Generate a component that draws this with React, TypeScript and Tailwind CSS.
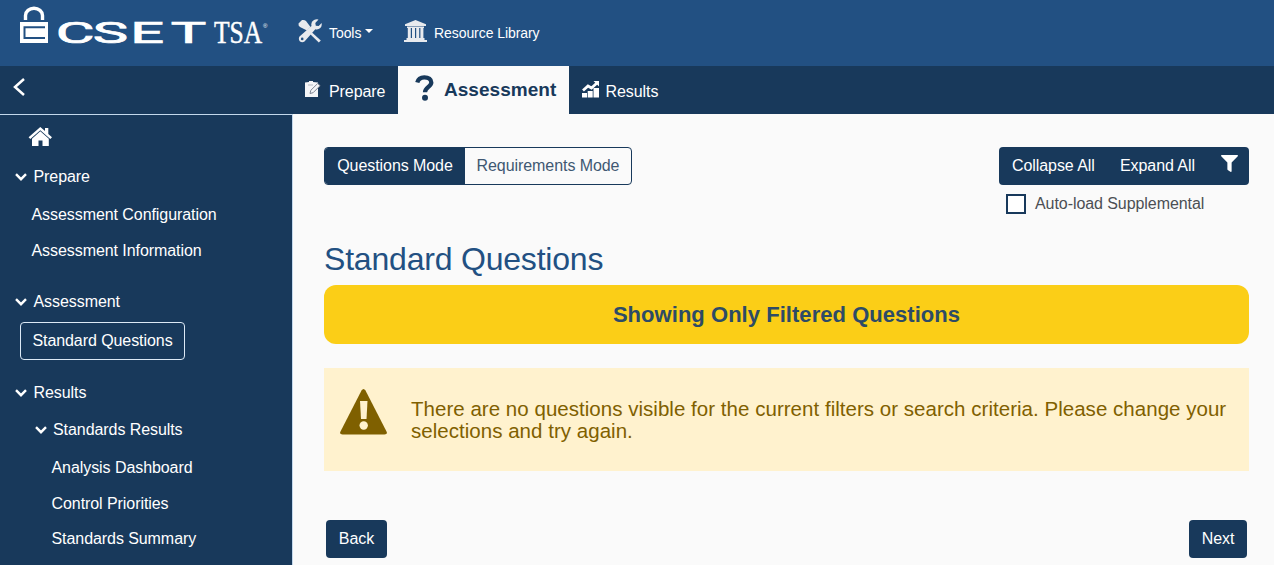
import type { ReactNode } from "react";
import { FaFilter } from "react-icons/fa";

function Logo() {
  return (
    <svg width="256" height="62" viewBox="18 4 256 62" fill="#fff" aria-label="CSET TSA">
      <path d="M25.500 20v-4.500a8.500 7.200 0 0 1 17 0V20" fill="none" stroke="#fff" strokeWidth="3.400" />
      <path d="M20 22h28v21H20Z" />
      <path d="M45 27.200H24.500V38H45" fill="none" stroke="#225082" strokeWidth="2" />
      <text transform="scale(2.050 1)" x="27.200 45.300 63.600 83.300" y="43" fontFamily="Roboto" fontSize="29" stroke="#fff" strokeWidth="0.700">CSET</text>
      <text x="214" y="43" fontFamily="Liberation Serif" fontSize="32" textLength="48" lengthAdjust="spacingAndGlyphs" stroke="#fff" strokeWidth="0.500">TSA</text>
      <text x="263" y="28" fontFamily="Liberation Sans" fontSize="6">®</text>
    </svg>
  );
}

function ToolsIcon() {
  return (
    <svg width="24" height="24" viewBox="0 0 24 24" fill="#e8eaee">
      <path d="M.500 4.500 4 1q2.500-.500 4 1l4.500 6L9 11.500 2 8Q0 6.500.500 4.500Z" />
      <path d="m13.500 13 9.300 8.500-2 2-9.300-9Z" />
      <path d="M1.500 17.500 13.500 7Q12.500 3 16 1q2-1 4.500-.500L17.300 4l.500 2.800 2.900.200L23.600 4q.600 3-1.300 5-2 2-5 1.300L6.500 22.500q-2.200 1.500-4.500 0-2-2.400-.500-5Z" />
      <circle cx="4.200" cy="19.900" r="1.300" fill="#225082" />
    </svg>
  );
}

function LibraryIcon() {
  return (
    <svg width="23" height="22" viewBox="0 0 23 22" fill="#e8eaee">
      <path d="M11.500 0 22 4.200V6H1V4.200ZM3 6.500h17V8H3ZM3.800 8h3v10h-3Zm4.200 0h3v10H8Zm4.200 0h3v10h-3Zm4.200 0h3v10h-3ZM2.500 18h18v2h-18ZM0 20h23v2H0Z" />
    </svg>
  );
}

function PrepareIcon() {
  return (
    <svg width="16" height="17" viewBox="0 0 16 17">
      <path d="M0 1.500 4 1V0h4v1l5 .500V16H0Z" fill="#f4f5f7" />
      <path d="m5 12.500.800-3.200 6.900-6.800 2.400 2.200-7 7Z" fill="#f4f5f7" stroke="#7d8492" strokeWidth="1" />
      <path d="M3 4h5" stroke="#8991a0" strokeWidth=".6" />
    </svg>
  );
}

function QuestionIcon() {
  return (
    <svg className="mt-[9px]" width="20" height="26" viewBox="0 0 20 26" fill="none">
      <path d="M2.300 7.500Q3.500 2.300 9.300 2.300c4.400 0 7 2 7 5.200 0 4.300-6.300 4.500-6.300 9.800" stroke="#18395b" strokeWidth="4.300" />
      <circle cx="10" cy="22.700" r="3" fill="#18395b" />
    </svg>
  );
}

function ResultsIcon() {
  return (
    <svg width="18" height="17" viewBox="0 0 18 17" fill="#fff">
      <path d="M0 12h5v4.500H0Zm5.700-2h5v6.500h-5Zm5.800-3H17v9.500h-5.500Z" />
      <path d="m1 9.500 5-4.500 3.500 2L15 2" fill="none" stroke="#fff" strokeWidth="2.800" />
      <path d="M11.500 0H17v5.500Z" />
    </svg>
  );
}

function HomeIcon() {
  return (
    <svg className="mt-3 ml-7" width="25" height="20" viewBox="0 0 25 20" fill="#fff">
      <path d="M12.300 0 17 4V1h3.300v6l3.700 3.200-1.700 1.800-10-8.700-10 8.700L.6 10.200Z" />
      <path d="m12.300 4.300 8.500 7.400V19h-6.300v-5.500h-4V19H4v-7.300Z" />
    </svg>
  );
}

function Chevron() {
  return (
    <svg className="shrink-0" width="12" height="8" viewBox="0 0 12 8" fill="none" stroke="#fff" strokeWidth="2.400">
      <path d="m1 1.200 5 5 5-5" />
    </svg>
  );
}

function Group({ className, children }: { className: string; children: ReactNode }) {
  return (
    <div className={`flex h-6 items-center gap-[6.500px] ${className}`}>
      <Chevron />
      <span>{children}</span>
    </div>
  );
}

export default function App() {
  return (
    <div className="flex h-[565px] w-[1274px] flex-col overflow-hidden bg-[#fafafa] font-['Liberation_Sans',Arial,sans-serif] text-base leading-6 tracking-[-0.07px] text-white">
      <header className="flex h-[66px] shrink-0 bg-[#225082]">
        <div className="w-[298px] pt-1 pl-[18px]"><Logo /></div>
        <div className="box-content flex h-6 items-center pt-[19px] text-sm">
          <ToolsIcon />
          <span className="ml-[7px] w-[33px] pt-[3px]">Tools</span>
          <span className="ml-[3px] h-0 w-0 border-x-4 border-t-4 border-x-transparent border-t-white" />
        </div>
        <div className="ml-[31px] box-content flex h-6 items-center pt-[19px] text-sm">
          <LibraryIcon />
          <span className="ml-[7px] pt-[3px]">Resource Library</span>
        </div>
      </header>

      <nav className="flex h-12 shrink-0 bg-[#18395b]">
        <div className="w-[305px] pt-3 pl-[13px]">
          <svg width="12" height="18" viewBox="0 0 12 18" fill="none" stroke="#fff" strokeWidth="2.500">
            <path d="M11 1 2 9l9 8" />
          </svg>
        </div>
        <div className="flex w-[93px] pt-[15px]">
          <PrepareIcon />
          <span className="ml-2 -mt-px">Prepare</span>
        </div>
        <div className="flex w-[171px] bg-[#fafafa] pl-[17px] text-[#18395b]">
          <QuestionIcon />
          <b className="mt-3 ml-[9px] text-[19px] leading-6 tracking-[0.040px]">Assessment</b>
        </div>
        <div className="flex pt-[15px] pl-[13px]">
          <ResultsIcon />
          <span className="ml-[5.500px] -mt-px">Results</span>
        </div>
      </nav>

      <div className="flex min-h-0 flex-1">
        <aside className="w-[293px] shrink-0 border-t border-r border-[#c3d8ec] bg-[#18395b]">
          <HomeIcon />
          <Group className="mt-[18px] pl-[15px]">Prepare</Group>
          <div className="mt-[14px] pl-[31.500px]">Assessment Configuration</div>
          <div className="mt-3 pl-[31.500px]">Assessment Information</div>
          <Group className="mt-[27px] pl-[15px]">Assessment</Group>
          <div className="mt-[8px] ml-5 flex h-[38px] w-[165px] items-center justify-center rounded border border-[#dce9f5]">Standard Questions</div>
          <Group className="mt-[21px] pl-[15px]">Results</Group>
          <Group className="mt-[13px] pl-[34.500px]">Standards Results</Group>
          <div className="mt-[14px] pl-[51.500px]">Analysis Dashboard</div>
          <div className="mt-3 pl-[51.500px]">Control Priorities</div>
          <div className="mt-[11px] pl-[51.500px]">Standards Summary</div>
        </aside>

        <main className="min-w-0 flex-1 pt-[33px] pr-[25px] pl-[31px]">
          <div className="flex h-[38px] justify-between">
            <div className="flex w-[308px] overflow-hidden rounded border border-[#18395b] leading-[35px]">
              <div className="w-[140px] bg-[#18395b] text-center">Questions Mode</div>
              <div className="flex-1 text-center text-[#3f5872]">Requirements Mode</div>
            </div>
            <div className="flex w-[250px] rounded bg-[#18395b] pl-[13px] leading-[37px]">
              <span className="w-[108px]">Collapse All</span>
              <span className="w-[101px]">Expand All</span>
              <FaFilter className="mt-2 h-[17px] w-[17px]" />
            </div>
          </div>
          <div className="mt-[7px] ml-[682px] flex h-6 items-center text-[#4c4f54]">
            <span className="h-5 w-5 border-2 border-[#18395b] bg-white" />
            <span className="ml-[9px]">Auto-load Supplemental</span>
          </div>
          <h1 className="mt-[23px] text-[32px] leading-10 tracking-[-0.2px] text-[#225082]">Standard Questions</h1>
          <div className="mt-[6px] flex h-[59px] items-center justify-center rounded-xl bg-[#fbce17] text-[22px] font-bold tracking-[0.040px] text-[#2d4b66]">Showing Only Filtered Questions</div>
          <div className="mt-6 flex h-[103px] bg-[#fff2ce] pl-4 text-[#7f6000]">
            <svg className="mt-5" width="48" height="48" viewBox="0 0 48 48">
              <path d="M21.500 2.500q2-3 4 0l21 41q1.500 3-2 3h-42q-3.500 0-2-3Z" fill="#7f6000" />
              <path d="M20 13h7.500l-1 18h-5.500Z" fill="#fff2ce" />
              <circle cx="23.700" cy="37.500" r="4.200" fill="#fff2ce" />
            </svg>
            <p className="mt-[30px] ml-[23px] w-[830px] text-[20.500px] leading-[22px] tracking-[0.030px]">There are no questions visible for the current filters or search criteria. Please change your selections and try again.</p>
          </div>
          <div className="mt-[49px] flex h-[38px] justify-between px-[2px] text-center leading-[37px]">
            <div className="w-[61px] rounded bg-[#18395b]">Back</div>
            <div className="w-[58px] rounded bg-[#18395b]">Next</div>
          </div>
        </main>
      </div>
    </div>
  );
}
